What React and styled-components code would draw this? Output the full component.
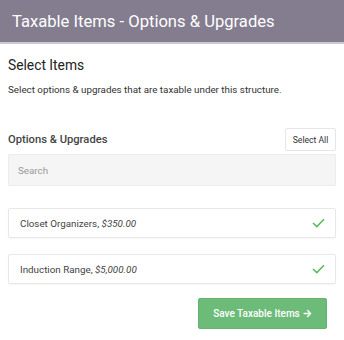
import styled, { createGlobalStyle } from "styled-components";
import { FaArrowRight } from "react-icons/fa";

const GlobalStyle = createGlobalStyle`
  body {
    margin: 0;
    background: #fff;
    font-family: Roboto, "Liberation Sans", sans-serif;
    color: #333;
  }
`;

const Page = styled.div`
  width: 344px;
  height: 340px;
  overflow: hidden;
`;

const Header = styled.div`
  height: 42px;
  background: #847d8f;
  border-bottom: 2px solid #cdc9d2;
  display: flex;
  align-items: center;
  padding: 0 12px;
`;

const Title = styled.h1`
  margin: 0;
  font-size: 16.6px;
  font-weight: 400;
  color: #fff;
`;

const Body = styled.div`
  padding: 11px 8px 0 8px;
  display: flex;
  flex-direction: column;
`;

const Heading = styled.h2`
  margin: 0;
  font-size: 13.8px;
  font-weight: 400;
  color: #222;
  line-height: 20px;
`;

const Desc = styled.p`
  margin: 8px 0 0;
  font-size: 9.8px;
  line-height: 14px;
  color: #333;
`;

const SectionBar = styled.div`
  margin-top: 31px;
  display: flex;
  align-items: center;
  justify-content: space-between;
`;

const SectionTitle = styled.div`
  font-size: 11.2px;
  font-weight: 500;
  color: #444;
`;

const SmallButton = styled.button`
  height: 23px;
  width: 51px;
  padding: 0;
  background: #fff;
  border: 1px solid #e6e6e6;
  border-radius: 2px;
  font-family: inherit;
  font-size: 8.6px;
  color: #333;
`;

const Search = styled.input`
  margin-top: 3px;
  height: 32px;
  box-sizing: border-box;
  width: 100%;
  background: #f5f5f5;
  border: 1px solid #ececec;
  border-radius: 2px;
  padding: 0 9px;
  font-family: inherit;
  font-size: 9.8px;
  color: #333;
  outline: none;

  &::placeholder {
    color: #9a9a9a;
  }
`;

const List = styled.div`
  margin-top: 22px;
  display: flex;
  flex-direction: column;
  gap: 16px;
`;

const Item = styled.div`
  height: 30px;
  box-sizing: border-box;
  border: 1px solid #e8e8e8;
  border-radius: 2px;
  box-shadow: 0 1px 1px rgba(0, 0, 0, 0.04);
  display: flex;
  align-items: center;
  justify-content: space-between;
  padding: 0 10px 0 11px;
  font-size: 9.8px;
  color: #444;
`;

const Price = styled.em`
  font-style: italic;
`;

const Footer = styled.div`
  margin-top: 14px;
  display: flex;
  justify-content: flex-end;
  padding-right: 9px;
`;

const SaveButton = styled.button`
  width: 129px;
  height: 31px;
  background: #6cbb79;
  border: 1px solid #62b46f;
  border-radius: 2px;
  color: #fff;
  font-family: inherit;
  font-size: 10px;
  font-weight: 500;
  display: flex;
  align-items: center;
  justify-content: center;
  gap: 3px;
`;

const Check = () => (
  <svg width="13" height="10" viewBox="0 0 13 10">
    <path d="M1 5 L4.8 8.6 L12 1.2" fill="none" stroke="#5cb85c" strokeWidth="1.5" />
  </svg>
);

const items = [
  { name: "Closet Organizers", price: "$350.00" },
  { name: "Induction Range", price: "$5,000.00" },
];

const App = () => {
  return (
    <Page>
      <GlobalStyle />
      <Header>
        <Title>Taxable Items - Options &amp; Upgrades</Title>
      </Header>
      <Body>
        <Heading>Select Items</Heading>
        <Desc>Select options &amp; upgrades that are taxable under this structure.</Desc>
        <SectionBar>
          <SectionTitle>Options &amp; Upgrades</SectionTitle>
          <SmallButton>Select All</SmallButton>
        </SectionBar>
        <Search placeholder="Search" />
        <List>
          {items.map((it) => (
            <Item key={it.name}>
              <span>
                {it.name}, <Price>{it.price}</Price>
              </span>
              <Check />
            </Item>
          ))}
        </List>
        <Footer>
          <SaveButton>
            Save Taxable Items <FaArrowRight size={9} />
          </SaveButton>
        </Footer>
      </Body>
    </Page>
  );
};

export default App;
